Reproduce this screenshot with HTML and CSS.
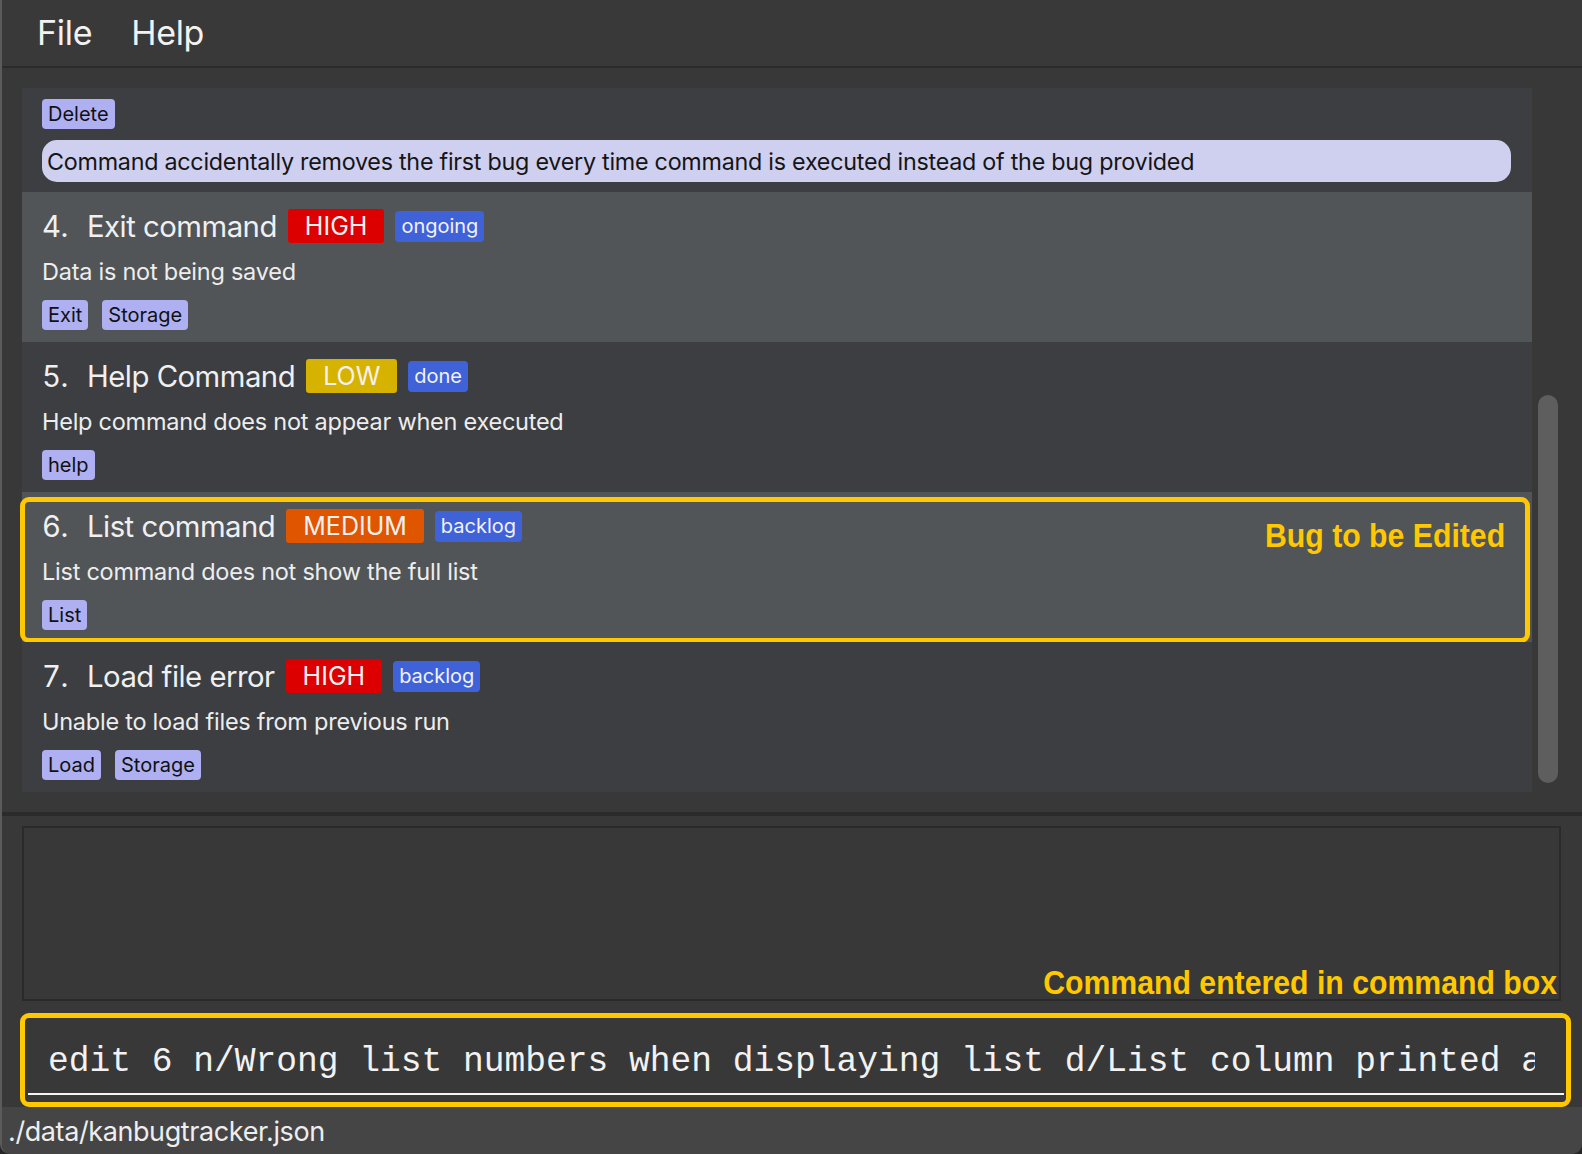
FILE: index.html
```html
<!DOCTYPE html>
<html>
<head>
<meta charset="utf-8">
<link rel="stylesheet" href="styles.css">
</head>
<body>
<div class="window">
  <div class="menubar">
    <span class="menu-item">File</span>
    <span class="menu-item">Help</span>
  </div>

  <div class="list-area">
    <div class="list">
      <div class="card odd partial">
        <div class="tags"><span class="tag">Delete</span></div>
        <div class="pill">Command accidentally removes the first bug every time command is executed instead of the bug provided</div>
      </div>

      <div class="card even">
        <div class="title-row">
          <span class="title"><span class="num">4.</span>Exit command</span>
          <span class="prio high">HIGH</span>
          <span class="status">ongoing</span>
        </div>
        <div class="desc">Data is not being saved</div>
        <div class="tags"><span class="tag">Exit</span><span class="tag">Storage</span></div>
      </div>

      <div class="card odd">
        <div class="title-row">
          <span class="title"><span class="num">5.</span>Help Command</span>
          <span class="prio low">LOW</span>
          <span class="status">done</span>
        </div>
        <div class="desc">Help command does not appear when executed</div>
        <div class="tags"><span class="tag">help</span></div>
      </div>

      <div class="card even marked">
        <div class="title-row">
          <span class="title"><span class="num">6.</span>List command</span>
          <span class="prio medium">MEDIUM</span>
          <span class="status">backlog</span>
        </div>
        <div class="desc">List command does not show the full list</div>
        <div class="tags"><span class="tag">List</span></div>
        <div class="annot-box"></div>
        <span class="annot annot-bug">Bug to be Edited</span>
      </div>

      <div class="card odd">
        <div class="title-row">
          <span class="title"><span class="num">7.</span>Load file error</span>
          <span class="prio high">HIGH</span>
          <span class="status">backlog</span>
        </div>
        <div class="desc">Unable to load files from previous run</div>
        <div class="tags"><span class="tag">Load</span><span class="tag">Storage</span></div>
      </div>
    </div>
    <div class="scroll-track"><div class="scroll-thumb"></div></div>
  </div>

  <div class="divider"></div>

  <div class="result-area">
    <div class="result-box">
      <span class="annot annot-cmd">Command entered in command box</span>
    </div>
  </div>

  <div class="command-area">
    <div class="command-field">
      <div class="command-text">edit 6 n/Wrong list numbers when displaying list d/List column printed as row</div>
    </div>
    <div class="annot-box cmd-box"></div>
  </div>

  <div class="statusbar">./data/kanbugtracker.json</div>
</div>
</body>
</html>
```

FILE: styles.css
```css
* { box-sizing: border-box; }

html, body {
  margin: 0;
  padding: 0;
  background: #262626;
}

body {
  font-family: Inter, "Noto Sans", sans-serif;
  color: #f0f0f0;
}

.window {
  width: 1582px;
  height: 1154px;
  background: #383838;
  border-left: 2px solid #5b5b5b;
  border-radius: 0 0 10px 10px;
  overflow: hidden;
  display: flex;
  flex-direction: column;
}

/* menu */
.menubar {
  height: 68px;
  flex: none;
  border-bottom: 2px solid #2b2b2b;
  background: #393939;
  display: flex;
  align-items: center;
  gap: 39px;
  padding-left: 35px;
  padding-bottom: 2px;
}

.menu-item {
  font-size: 34px;
  color: #f2f2f2;
  letter-spacing: -0.3px;
}

/* list */
.list-area {
  flex: none;
  height: 744px;
  display: flex;
  padding: 20px 0 20px 20px;
}

.list {
  width: 1510px;
  height: 704px;
  background: #3c3e41;
  display: flex;
  flex-direction: column;
}

.card {
  position: relative;
  padding: 17px 20px 12px 20px;
  height: 150px;
  flex: none;
}

.card.even { background: #515558; }
.card.odd { background: #3c3e41; }

.card.partial {
  height: 104px;
  padding-top: 11px;
  padding-bottom: 10px;
}

.title-row {
  height: 34px;
  display: flex;
  align-items: center;
}

.title {
  font-size: 29.3px;
  color: #f0f0f0;
  letter-spacing: -0.5px;
  margin-right: 11px;
}

.num {
  display: inline-block;
  width: 45px;
  font-variant-numeric: tabular-nums;
}

.prio {
  height: 34px;
  display: flex;
  align-items: center;
  padding: 0 17px;
  font-size: 25px;
  color: #f6f0f0;
  border-radius: 3px;
  margin-right: 11px;
}

.prio.high { background: #dc0000; }
.prio.medium { background: #e05500; }
.prio.low { background: #d6b300; }

.status {
  height: 31px;
  display: flex;
  align-items: center;
  padding: 0 6px;
  font-size: 20px;
  color: #f2f2f8;
  background: #3f62d9;
  border-radius: 4px;
}

.desc {
  margin-top: 14px;
  height: 30px;
  line-height: 30px;
  font-size: 23.5px;
  color: #ededed;
  letter-spacing: -0.25px;
}

.tags {
  margin-top: 13px;
  height: 30px;
  display: flex;
  gap: 14px;
}

.partial .tags { margin-top: 0; }

.tag {
  height: 30px;
  display: flex;
  align-items: center;
  padding: 0 6px;
  font-size: 20px;
  color: #111111;
  background: #aeb0f1;
  border-radius: 4px;
}

.pill {
  margin-top: 11px;
  height: 42px;
  width: 1469px;
  display: flex;
  align-items: center;
  padding-left: 5px;
  font-size: 23.3px;
  color: #151515;
  background: #cfd0ef;
  border-radius: 15px;
  letter-spacing: -0.25px;
}

/* annotations */
.annot-box {
  position: absolute;
  left: -2px;
  right: 2px;
  top: 5px;
  bottom: -1px;
  border: 5px solid #ffc800;
  border-radius: 9px;
  pointer-events: none;
}

.annot {
  position: absolute;
  font-family: "Liberation Sans", Arial, sans-serif;
  font-weight: bold;
  font-size: 33px;
  color: #ffc800;
  white-space: nowrap;
  transform: scaleX(0.916);
  transform-origin: right center;
  line-height: 1;
}

.annot-bug {
  right: 27px;
  top: 27px;
}

/* scrollbar */
.scroll-track {
  width: 32px;
  position: relative;
  padding-left: 6px;
}

.scroll-thumb {
  margin-top: 307px;
  width: 20px;
  height: 388px;
  background: #5e5e5e;
  border-radius: 10px;
}

.divider {
  flex: none;
  height: 4px;
  background: #2b2b2b;
}

/* result */
.result-area {
  flex: none;
  height: 185px;
  padding: 10px 0 0 20px;
}

.result-box {
  position: relative;
  width: 1539px;
  height: 175px;
  border: 2px solid #2a2a2a;
  background: #383838;
}

.annot-cmd {
  right: 2px;
  top: 138px;
}

/* command */
.command-area {
  flex: none;
  position: relative;
  height: 106px;
  padding: 17px 0 0 26px;
}

.command-field {
  width: 1536px;
  height: 77px;
  border-bottom: 2px solid #f4f4f4;
  padding: 0 29px 0 20px;
  display: flex;
  align-items: center;
}

.command-text {
  font-family: "Liberation Mono", "Courier New", monospace;
  font-size: 34.6px;
  color: #f2f2f2;
  white-space: nowrap;
  overflow: hidden;
  width: 100%;
  padding-top: 12px;
}

.cmd-box {
  left: 18px;
  top: 12px;
  width: 1551px;
  height: 94px;
  right: auto;
  bottom: auto;
}

/* status */
.statusbar {
  flex: 1;
  background: #454545;
  font-size: 27px;
  color: #eeeeee;
  padding-left: 6px;
  display: flex;
  align-items: center;
  letter-spacing: -0.4px;
  padding-top: 2px;
}
```
